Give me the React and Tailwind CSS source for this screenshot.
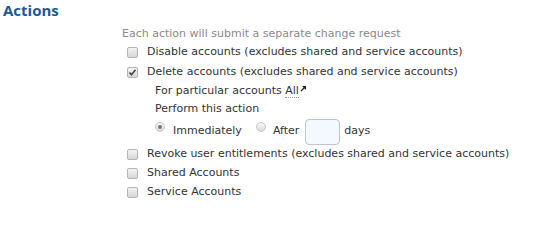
import React from "react";

const Box = ({ checked }) => (
  <span className="inline-flex items-center justify-center w-[11px] h-[11px] rounded-[2px] border border-[#b5b5b5] bg-gradient-to-b from-[#f4f4f4] to-[#d6d6d6] mr-[9px]">
    {checked && (
      <svg width="9" height="9" viewBox="0 0 9 9">
        <path d="M1.5 4.5 L3.5 6.8 L7.5 1.8" fill="none" stroke="#444" strokeWidth="1.6" />
      </svg>
    )}
  </span>
);

const Radio = ({ checked, className }) => (
  <span className={`inline-flex items-center justify-center w-[10px] h-[10px] rounded-full border border-[#c8c8c8] bg-gradient-to-b from-[#f6f6f6] to-[#dcdcdc] -mt-[10px] ${className}`}>
    {checked && <span className="w-[4px] h-[4px] rounded-full bg-[#777]" />}
  </span>
);

const Row = ({ checked, children }) => (
  <div className="flex items-center h-[19px]">
    <Box checked={checked} />
    <span>{children}</span>
  </div>
);

export default function App() {
  return (
    <div className="w-[543px] h-[207px] bg-white text-[#333] text-[11px] font-['DejaVu_Sans',sans-serif]">
      <h1 className="pl-[3px] pt-[1px] text-[15px] font-bold text-[#1a5896] leading-[19px] font-['Open_Sans',sans-serif]">Actions</h1>
      <div className="ml-[122px] mt-[4px]">
        <div className="text-[#8a8a8a] leading-[19px]">Each action will submit a separate change request</div>
        <div className="ml-[5px]">
          <Row>Disable accounts (excludes shared and service accounts)</Row>
          <div className="mt-[1px]">
            <Row checked>Delete accounts (excludes shared and service accounts)</Row>
          </div>
          <div className="ml-[28px]">
            <div className="leading-[18px] flex items-center">
              <span>For particular accounts&nbsp;</span>
              <span className="border-b border-dotted border-[#999] leading-[13px]">All</span>
              <svg width="7" height="7" viewBox="0 0 7 7" className="ml-[1px] -mt-[6px]">
                <path d="M1 6 L5.5 1.5" stroke="#222" strokeWidth="1.2" />
                <path d="M2 1 H6 V5 Z" fill="#222" />
              </svg>
            </div>
            <div className="leading-[18px]">Perform this action</div>
            <div className="flex items-center h-[27px]">
              <Radio checked className="mr-[8px]" />
              <span className="mr-[14px]">Immediately</span>
              <Radio className="mr-[7px]" />
              <span className="mr-[6px]">After</span>
              <span className="w-[35px] h-[26px] rounded-[4px] border border-[#bcc6ce] bg-[#f3f9fe] mr-[4px]" />
              <span>days</span>
            </div>
          </div>
          <Row>Revoke user entitlements (excludes shared and service accounts)</Row>
          <Row>Shared Accounts</Row>
          <Row>Service Accounts</Row>
        </div>
      </div>
    </div>
  );
}
